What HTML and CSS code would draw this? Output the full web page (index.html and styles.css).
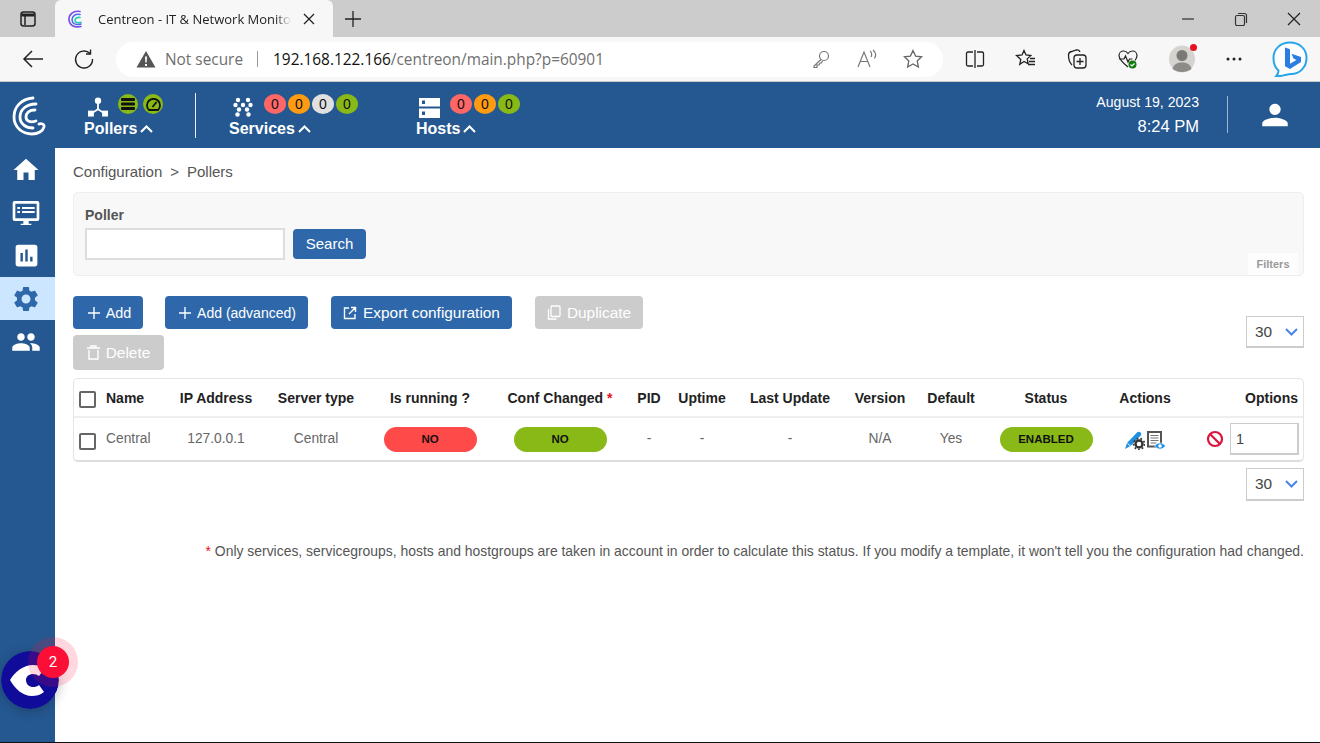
FILE: index.html
```html
<!DOCTYPE html>
<html lang="en">

<head>
    <meta charset="UTF-8">
    <title>Centreon - IT &amp; Network Monitoring</title>
    <link rel="stylesheet" href="styles.css">
</head>

<body>
    <!-- browser tabs -->
    <div class="tabstrip">
        <svg class="tabs-btn" width="18" height="18" viewBox="0 0 18 18" fill="none" stroke="#222" stroke-width="1.5">
            <rect x="2" y="2" width="14" height="14" rx="2.5" />
            <path d="M2.5 5h13" stroke-width="3" />
            <path d="M6 5v10" />
        </svg>
        <div class="tab">
            <svg class="favicon" width="20" height="20" viewBox="0 0 20 20" fill="none" stroke-width="1.6" stroke-linecap="round">
                <path d="M13 2.5C6 1 1.5 6 2 11c.5 5 5 8 12 6.5" stroke="#7a4de8" />
                <path d="M13 5.5C8 4.5 4.8 7.5 5 11c.2 3.5 4 5.5 9 4" stroke="#4a6cf0" />
                <path d="M13 8.5c-3-.5-5 1-5 2.800 0 2 2.500 3 6 2" stroke="#2cc9b5" />
            </svg>
            <span class="tab-title">Centreon - IT &amp; Network Monito</span>
            <svg class="tab-close" width="12" height="12" viewBox="0 0 12 12" stroke="#222" stroke-width="1.3">
                <path d="M1 1l10 10M11 1L1 11" />
            </svg>
        </div>
        <svg class="new-tab" width="18" height="18" viewBox="0 0 18 18" stroke="#222" stroke-width="1.3">
            <path d="M9 1v16M1 9h16" />
        </svg>
        <div class="window-btns">
            <svg width="14" height="14" viewBox="0 0 14 14" stroke="#444" stroke-width="1.4">
                <path d="M1 7h12" />
            </svg>
            <svg width="14" height="14" viewBox="0 0 14 14" fill="none" stroke="#333" stroke-width="1.2">
                <rect x="1.5" y="3.5" width="9" height="10" rx="1.5" />
                <path d="M4 1.5h6.5a2 2 0 0 1 2 2V11" />
            </svg>
            <svg width="14" height="14" viewBox="0 0 14 14" stroke="#222" stroke-width="1.2">
                <path d="M1 1l12 12M13 1L1 13" />
            </svg>
        </div>
    </div>

    <!-- browser toolbar -->
    <div class="toolbar">
        <svg class="nav-back" width="22" height="20" viewBox="0 0 22 20" fill="none" stroke="#222" stroke-width="1.5">
            <path d="M21 10H2M10 2l-8 8 8 8" />
        </svg>
        <svg class="nav-reload" width="22" height="22" viewBox="0 0 22 22" fill="none" stroke="#222" stroke-width="1.4">
            <path d="M17 5.5A8.5 8.5 0 1 0 19.5 11" />
            <path d="M17.5 1.5v4.5H13" />
        </svg>
        <div class="addressbar">
            <svg width="20" height="18" viewBox="0 0 20 18">
                <path d="M10 1L19.5 17.5H.5z" fill="#555" />
                <path d="M9 6.5h2l-.3 6h-1.4zM9 14h2v2H9z" fill="#fff" />
            </svg>
            <span class="not-secure">Not secure</span>
            <span class="addr-sep"></span>
            <span class="url"><span class="url-host">192.168.122.166</span>/centreon/main.php?p=60901</span>
            <span class="addr-icons">
                <svg width="20" height="20" viewBox="0 0 20 20" fill="none" stroke="#777" stroke-width="1.2">
                    <circle cx="13" cy="7" r="4.5" />
                    <path d="M10 10.5L3 17v1.5h3V16h2l1-2h1.5l1-2" />
                </svg>
                <svg width="22" height="20" viewBox="0 0 22 20" fill="none" stroke="#777" stroke-width="1.2">
                    <path d="M2 18L8 3l6 15M4.5 12.5h7" />
                    <path d="M14 2c2 1.5 2 4.5 1 6M17 1c3 2.5 3 6 1.5 8.5" />
                </svg>
                <svg width="20" height="20" viewBox="0 0 20 20" fill="none" stroke="#666" stroke-width="1.3">
                    <path d="M10 1.5l2.600 5.600 6 .7-4.400 4.200 1.200 6-5.400-3-5.400 3 1.200-6L1.400 7.800l6-.7z" />
                </svg>
            </span>
        </div>
        <div class="tool-icons">
            <svg width="20" height="20" viewBox="0 0 20 20" fill="none" stroke="#222" stroke-width="1.3">
                <path d="M8 3H3a1.5 1.5 0 0 0-1.5 1.5v11A1.5 1.5 0 0 0 3 17h5M12 3h5a1.5 1.5 0 0 1 1.5 1.5v11A1.5 1.5 0 0 1 17 17h-5M10 1v18" />
            </svg>
            <svg width="22" height="20" viewBox="0 0 22 20" fill="none" stroke="#222" stroke-width="1.3">
                <path d="M9 1.5l2 4.500 4.800.5-3.600 3.400 1 4.900L9 12.500l-4.200 2.800 1-4.900L1.500 6.500 7 6z" />
                <path d="M15 9.500h5M14 12.500h6M13 15.500h7" />
            </svg>
            <svg width="20" height="22" viewBox="0 0 20 22" fill="none" stroke="#222" stroke-width="1.3">
                <rect x="7" y="7" width="12" height="13" rx="3" />
                <path d="M13 10v7M9.5 13.5h7M5 17C3 15 1.5 12 1.5 7c0-1.5 1-3 3-3.500l5-1.500c1.500-.4 3 .5 3.500 2" />
            </svg>
            <svg width="22" height="22" viewBox="0 0 22 22" fill="none" stroke="#222" stroke-width="1.2">
                <path d="M11 19C6 15 2 11.500 2 7.500 2 5 4 3 6.500 3 8.500 3 10 4 11 5.500 12 4 13.500 3 15.500 3 18 3 20 5 20 7.500c0 2-1 3.500-2 5" />
                <path d="M2 11h5l1.500-3 2.500 6 1.500-3h3" />
                <circle cx="15.5" cy="16.5" r="4" fill="#107c10" stroke="none" />
                <path d="M13.500 16.500l1.500 1.500 2.500-2.500" stroke="#fff" />
            </svg>
            <span class="profile">
                <svg width="26" height="28" viewBox="0 0 26 28">
                    <ellipse cx="13" cy="14" rx="13" ry="13.5" fill="#d5d3cf" />
                    <circle cx="13" cy="10.5" r="5.5" fill="#7b7976" />
                    <path d="M3.500 24c1-5 5-6.500 9.500-6.500s8.500 1.500 9.500 6.500c-2.500 2-6 3-9.500 3s-7-1-9.500-3z" fill="#8d8b88" />
                </svg>
                <span class="profile-dot"></span>
            </span>
            <svg width="18" height="6" viewBox="0 0 18 6" fill="#222">
                <circle cx="3" cy="3" r="1.5" />
                <circle cx="9" cy="3" r="1.5" />
                <circle cx="15" cy="3" r="1.5" />
            </svg>
        </div>
        <svg class="bing" width="36" height="36" viewBox="0 0 36 36">
            <path d="M18 1.500C27.500 1.500 34.500 8 34.500 17S28 33 19 33c-3 0-10 2.500-15 2.500 2-2 2.500-4.500 2.500-6C3 26.500 1.500 22 1.500 17 1.500 8 8.500 1.500 18 1.500z" fill="#fff" stroke="#27a5e8" stroke-width="2" />
            <path d="M13 6.500l5 1.800v14.500l6.500-3.800-3-1.500-2-4.800 9.500 3.300v5L18 28l-5-2.800z" fill="#2a7de1" />
        </svg>
    </div>

    <!-- top counters -->
    <header class="app-header">
        <svg class="logo" width="34" height="40" viewBox="0 0 34 40" fill="none" stroke="#fff" stroke-width="2.8" stroke-linecap="round">
            <path d="M21 2C9 3 2 11 2 21c0 10 8 17 18 17 6 0 11-3 12-7 .5-3-3-4-5-3" />
            <path d="M24 8C15 8 8 13 8 21c0 7 6 11 13 11" />
            <path d="M23 14c-6 0-9 3-9 7 0 4 4 6 10 4" />
        </svg>

        <div class="group group-pollers">
            <div class="group-top">
                <svg class="group-icon" width="20" height="20" viewBox="0 0 22 22" fill="#fff">
                    <circle cx="11" cy="4" r="3.5" />
                    <path d="M10 6h2v7l6 4-1 1.500-6-4-6 4-1-1.500 6-4z" />
                    <rect x="0" y="15" width="6.5" height="6.5" />
                    <rect x="15.5" y="15" width="6.5" height="6.5" />
                </svg>
                <span class="badge badge-green badge-poller">
                    <svg width="14" height="12" viewBox="0 0 14 12" fill="#111">
                        <rect x="0" y="0" width="14" height="3" rx="1" />
                        <rect x="0" y="4.5" width="14" height="3" rx="1" />
                        <rect x="0" y="9" width="14" height="3" rx="1" />
                    </svg>
                </span>
                <span class="badge badge-green badge-poller">
                    <svg width="15" height="13" viewBox="0 0 15 13" fill="none" stroke="#111" stroke-width="1.8">
                        <path d="M3 12A6.500 6.500 0 1 1 12 12z" />
                        <path d="M6.500 9l4-5" />
                    </svg>
                </span>
            </div>
            <div class="group-label">Pollers <svg class="chev" width="13" height="8" viewBox="0 0 13 8" fill="none" stroke="#fff" stroke-width="2">
                    <path d="M1 7l5.500-5.500L12 7" />
                </svg></div>
        </div>
        <span class="header-sep"></span>

        <div class="group group-services">
            <div class="group-top">
                <svg class="group-icon" width="20" height="20" viewBox="0 0 20 20" fill="#fff">
                    <circle cx="5" cy="3" r="2.2" />
                    <circle cx="15" cy="3" r="2.2" />
                    <circle cx="2.5" cy="8" r="2.2" />
                    <circle cx="10" cy="8" r="2.2" />
                    <circle cx="17.5" cy="8" r="2.2" />
                    <circle cx="6" cy="12.5" r="2.2" />
                    <circle cx="14" cy="12.5" r="2.2" />
                    <circle cx="4.5" cy="17.5" r="2.2" />
                    <circle cx="15.5" cy="17.5" r="2.2" />
                </svg>
                <span class="badge badge-red">0</span>
                <span class="badge badge-orange">0</span>
                <span class="badge badge-grey">0</span>
                <span class="badge badge-green">0</span>
            </div>
            <div class="group-label">Services <svg class="chev" width="13" height="8" viewBox="0 0 13 8" fill="none" stroke="#fff" stroke-width="2">
                    <path d="M1 7l5.500-5.500L12 7" />
                </svg></div>
        </div>

        <div class="group group-hosts">
            <div class="group-top">
                <svg class="group-icon" width="21" height="21" viewBox="0 0 21 21" fill="#fff">
                    <path d="M0 1h21v8.500H0zM3 3.500v3.500h3V3.500zM0 11.500h21V21H0zM3 14.500v3.500h3v-3.500z" fill-rule="evenodd" />
                </svg>
                <span class="badge badge-red">0</span>
                <span class="badge badge-orange">0</span>
                <span class="badge badge-green">0</span>
            </div>
            <div class="group-label">Hosts <svg class="chev" width="13" height="8" viewBox="0 0 13 8" fill="none" stroke="#fff" stroke-width="2">
                    <path d="M1 7l5.500-5.500L12 7" />
                </svg></div>
        </div>

        <div class="clock">
            <div class="clock-date">August 19, 2023</div>
            <div class="clock-time">8:24 PM</div>
        </div>
        <span class="clock-sep"></span>
        <svg class="user-icon" width="34" height="34" viewBox="0 0 24 24" fill="#fff">
            <path d="M12 12c2.210 0 4-1.790 4-4s-1.790-4-4-4-4 1.790-4 4 1.790 4 4 4zm0 2c-2.670 0-9 1.340-9 4v2h18v-2c0-2.660-6.330-4-9-4z" />
        </svg>
    </header>

    <div class="app-body">
        <nav class="sidebar">
            <a class="side-item">
                <svg width="30" height="30" viewBox="0 0 24 24" fill="#fff">
                    <path d="M10 20v-6h4v6h5v-8h3L12 3 2 12h3v8z" />
                </svg>
            </a>
            <a class="side-item">
                <svg width="32" height="32" viewBox="0 0 24 24" fill="#fff">
                    <path fill-rule="evenodd" d="M3.500 3h17A1.500 1.500 0 0 1 22 4.500v12a1.500 1.500 0 0 1-1.500 1.500H14v2h2v1H8v-1h2v-2H3.500A1.500 1.500 0 0 1 2 16.500v-12A1.500 1.500 0 0 1 3.500 3zM4 5v11h16V5zM5.500 7.500h2v1.500h-2zM9 7.500h9.500v1.500H9zM5.500 10.500h2V12h-2zM9 10.500h9.500V12H9z" />
                </svg>
            </a>
            <a class="side-item">
                <svg width="29" height="29" viewBox="0 0 24 24" fill="#fff">
                    <path d="M19 3H5c-1.100 0-2 .9-2 2v14c0 1.100.9 2 2 2h14c1.100 0 2-.9 2-2V5c0-1.100-.9-2-2-2zM9 17H7v-7h2v7zm4 0h-2V7h2v10zm4 0h-2v-4h2v4z" />
                </svg>
            </a>
            <a class="side-item side-active">
                <svg width="30" height="30" viewBox="0 0 24 24" fill="#2e68aa">
                    <path d="M19.140 12.940c.04-.3.06-.61.06-.94 0-.32-.02-.64-.07-.94l2.030-1.580c.18-.14.23-.41.12-.61l-1.920-3.320c-.12-.22-.37-.29-.59-.22l-2.390.96c-.5-.38-1.030-.7-1.620-.94l-.36-2.540c-.04-.24-.24-.41-.48-.41h-3.840c-.24 0-.43.17-.47.41l-.36 2.540c-.59.24-1.130.57-1.620.94l-2.390-.96c-.22-.08-.47 0-.59.22L2.740 8.870c-.12.21-.08.47.12.61l2.030 1.580c-.05.3-.09.63-.09.94s.02.64.07.94l-2.030 1.580c-.18.14-.23.41-.12.61l1.920 3.320c.12.22.37.29.59.22l2.390-.96c.5.38 1.030.7 1.620.94l.36 2.540c.05.24.24.41.48.41h3.840c.24 0 .44-.17.47-.41l.36-2.540c.59-.24 1.130-.56 1.620-.94l2.390.96c.22.08.47 0 .59-.22l1.920-3.320c.12-.22.07-.47-.12-.61l-2.010-1.580zM12 15.600c-1.980 0-3.600-1.620-3.600-3.600s1.620-3.600 3.600-3.600 3.600 1.620 3.600 3.600-1.620 3.600-3.600 3.600z" />
                </svg>
            </a>
            <a class="side-item">
                <svg width="30" height="30" viewBox="0 0 24 24" fill="#fff">
                    <path d="M16 11c1.660 0 2.990-1.340 2.990-3S17.660 5 16 5c-1.660 0-3 1.340-3 3s1.340 3 3 3zm-8 0c1.660 0 2.990-1.340 2.990-3S9.660 5 8 5C6.340 5 5 6.340 5 8s1.340 3 3 3zm0 2c-2.330 0-7 1.170-7 3.500V19h14v-2.500c0-2.330-4.670-3.500-7-3.500zm8 0c-.29 0-.62.02-.97.05 1.160.84 1.970 1.970 1.970 3.450V19h6v-2.500c0-2.330-4.670-3.500-7-3.500z" />
                </svg>
            </a>
        </nav>

        <main class="content">
            <div class="breadcrumb"><span>Configuration</span><span class="crumb-sep">&gt;</span><span>Pollers</span></div>

            <form class="filters" onsubmit="return false">
                <label class="filter-label">Poller</label>
                <div class="filter-row">
                    <input class="filter-input" type="text">
                    <button class="btn btn-search">Search</button>
                </div>
                <span class="filters-tag">Filters</span>
            </form>

            <div class="actions-bar">
                <div class="btn-list">
                    <div class="btn-row">
                        <button class="btn btn-add">
                            <svg width="12" height="12" viewBox="0 0 14 14" stroke="#fff" stroke-width="1.6"><path d="M7 0v14M0 7h14" /></svg>
                            Add
                        </button>
                        <button class="btn btn-advanced">
                            <svg width="12" height="12" viewBox="0 0 14 14" stroke="#fff" stroke-width="1.6"><path d="M7 0v14M0 7h14" /></svg>
                            Add (advanced)
                        </button>
                        <button class="btn btn-export">
                            <svg width="14" height="14" viewBox="0 0 14 14" fill="none" stroke="#fff" stroke-width="1.4"><path d="M6 2H1.500v10.500H12V8M8 1.500h4.500V6M12.500 1.500L6 8" /></svg>
                            Export configuration
                        </button>
                        <button class="btn btn-off btn-duplicate">
                            <svg width="14" height="15" viewBox="0 0 14 15" fill="none" stroke="#fff" stroke-width="1.3"><rect x="4" y="1" width="9" height="10.5" rx="1" /><path d="M1.500 4v10h8" /></svg>
                            Duplicate
                        </button>
                    </div>
                    <div class="btn-row">
                        <button class="btn btn-off btn-delete">
                            <svg width="13" height="15" viewBox="0 0 13 15" fill="none" stroke="#fff" stroke-width="1.4"><path d="M0 3h13M4 3V1h5v2M2 5v9h9V5" /></svg>
                            Delete
                        </button>
                    </div>
                </div>
                <div class="pager-select pager-top">30
                    <svg width="13" height="8" viewBox="0 0 13 8" fill="none" stroke="#4a86e8" stroke-width="2"><path d="M1 1l5.500 5.500L12 1" /></svg>
                </div>
            </div>

            <div class="table-wrap">
                <table class="list">
                    <colgroup>
                        <col class="c-check"><col class="c-name"><col class="c-ip"><col class="c-type"><col class="c-run"><col class="c-conf"><col class="c-pid"><col class="c-up"><col class="c-last"><col class="c-ver"><col class="c-def"><col class="c-status"><col class="c-act"><col class="c-opt">
                    </colgroup>
                    <thead>
                        <tr>
                            <th><span class="check"></span></th>
                            <th class="left">Name</th>
                            <th>IP Address</th>
                            <th>Server type</th>
                            <th>Is running ?</th>
                            <th>Conf Changed <span class="star">*</span></th>
                            <th>PID</th>
                            <th>Uptime</th>
                            <th>Last Update</th>
                            <th>Version</th>
                            <th>Default</th>
                            <th>Status</th>
                            <th>Actions</th>
                            <th class="right">Options</th>
                        </tr>
                    </thead>
                    <tbody>
                        <tr>
                            <td><span class="check"></span></td>
                            <td class="left">Central</td>
                            <td>127.0.0.1</td>
                            <td>Central</td>
                            <td><span class="pill pill-red">NO</span></td>
                            <td><span class="pill pill-green">NO</span></td>
                            <td>-</td>
                            <td>-</td>
                            <td>-</td>
                            <td>N/A</td>
                            <td>Yes</td>
                            <td><span class="pill pill-green">ENABLED</span></td>
                            <td>
                                <div class="act-icons">
                                    <svg width="20" height="20" viewBox="0 0 20 20">
                                        <path d="M0 19l2-6L12 2.500c1-1 2.500-1 3.500 0s1 2 .2 3L5.500 16z" fill="#1e90e0" />
                                        <path d="M2.500 13.500l3 2.500" stroke="#fff" stroke-width="1" />
                                        <circle cx="14" cy="14" r="3.5" fill="none" stroke="#333" stroke-width="2.4" />
                                        <circle cx="14" cy="14" r="5.5" fill="none" stroke="#333" stroke-width="1.6" stroke-dasharray="1.8 2" />
                                    </svg>
                                    <svg width="19" height="19" viewBox="0 0 19 19">
                                        <rect x="1" y="1" width="13" height="14.5" fill="#fff" stroke="#555" stroke-width="2" />
                                        <path d="M3.500 4.500h8M3.500 7h8M3.500 9.500h8M3.500 12h6" stroke="#777" stroke-width="1.2" />
                                        <path d="M7.500 15c3-4 8-4 11 0-3 4-8 4-11 0z" fill="#1e90e0" stroke="#fff" stroke-width=".6" />
                                        <circle cx="13" cy="15" r="1.8" fill="#fff" />
                                    </svg>
                                </div>
                            </td>
                            <td class="opt-cell">
                                <svg width="18" height="18" viewBox="0 0 18 18" fill="none" stroke="#dc143c" stroke-width="2.2">
                                    <circle cx="9" cy="9" r="7" />
                                    <path d="M4 4l10 10" />
                                </svg>
                                <input class="opt-input" type="text" value="1">
                            </td>
                        </tr>
                    </tbody>
                </table>
            </div>

            <div class="pager-bottom">
                <div class="pager-select">30
                    <svg width="13" height="8" viewBox="0 0 13 8" fill="none" stroke="#4a86e8" stroke-width="2"><path d="M1 1l5.500 5.500L12 1" /></svg>
                </div>
            </div>

            <p class="footnote"><span class="star">*</span> Only services, servicegroups, hosts and hostgroups are taken in account in order to calculate this status. If you modify a template, it won't tell you the configuration had changed.</p>
        </main>
    </div>

    <!-- floating news button -->
    <div class="news">
        <span class="news-halo"></span>
        <svg class="news-logo" width="58" height="58" viewBox="0 0 58 58">
            <circle cx="29" cy="29" r="29" fill="#100c99" />
            <path d="M9 29C14 21 22 14 32 14c4 0 8 1 12 3l-6 8c-5-4-13-2-13 4 0 7 8 9 13 5l5 7c-4 3-8 4-12 4C22 45 14 38 9 29z" fill="#fff" />
        </svg>
        <span class="news-count">2</span>
    </div>
</body>

</html>
```

FILE: styles.css
```css
* {
    box-sizing: border-box;
    font-family: "Liberation Sans", Arial, sans-serif;
}

html,
body {
    height: 743px;
    padding: 0;
    margin: 0;
    overflow: hidden;
}

body {
    position: relative;
    display: flex;
    flex-direction: column;
    background-color: #fff;
    border-bottom: 1px solid #111;
}

/* browser frame */
.tabstrip {
    display: flex;
    align-items: center;
    height: 37px;
    flex-shrink: 0;
    background-color: #ccc;
}

.tabs-btn {
    margin-left: 19px;
    margin-top: 1px;
}

.tab {
    display: flex;
    align-items: center;
    align-self: flex-end;
    width: 278px;
    height: 37px;
    margin-left: 18px;
    padding: 0 12px;
    background-color: #f7f7f7;
    border-radius: 6px 6px 0 0;
}

.tab-title {
    margin-left: 11px;
    white-space: nowrap;
    font-family: "Open Sans", sans-serif;
    font-size: 13px;
    color: #222;
    -webkit-mask-image: linear-gradient(to right, #000 92%, transparent);
    mask-image: linear-gradient(to right, #000 92%, transparent);
}

.tab-close {
    margin-left: auto;
    margin-right: 6px;
}

.new-tab {
    margin-left: 11px;
}

.window-btns {
    display: flex;
    gap: 39px;
    margin-left: auto;
    margin-right: 19px;
}

.toolbar {
    display: flex;
    align-items: center;
    height: 45px;
    flex-shrink: 0;
    background-color: #f7f7f7;
    border-bottom: 1px solid #c8c8c8;
}

.nav-back {
    margin-left: 22px;
}

.nav-reload {
    margin-left: 29px;
}

.addressbar {
    display: flex;
    align-items: center;
    width: 827px;
    height: 35px;
    margin-left: 21px;
    padding: 0 20px;
    background-color: #fff;
    border-radius: 18px;
}

.not-secure {
    margin-left: 9px;
    font-family: "Open Sans", sans-serif;
    font-size: 15.4px;
    color: #707070;
}

.addr-sep {
    width: 1px;
    height: 16px;
    margin: 0 15px 0 14px;
    background-color: #999;
}

.url {
    font-family: "Open Sans", sans-serif;
    font-size: 15.4px;
    color: #707070;
}

.url-host {
    font-family: inherit;
    color: #111;
}

.addr-icons {
    display: flex;
    align-items: center;
    gap: 25px;
    margin-left: auto;
}

.tool-icons {
    display: flex;
    align-items: center;
    gap: 30px;
    margin-left: 22px;
}

.profile {
    position: relative;
    display: flex;
}

.profile-dot {
    position: absolute;
    top: -1px;
    right: -2px;
    width: 7px;
    height: 7px;
    background-color: #e81123;
    border-radius: 50%;
}

.bing {
    margin-left: 29px;
}

/* app header */
.app-header {
    display: flex;
    align-items: flex-start;
    height: 66px;
    flex-shrink: 0;
    background-color: #255891;
    color: #fff;
}

.logo {
    margin: 14px 0 0 12px;
}

.group {
    display: flex;
    flex-direction: column;
}

.group-top {
    display: flex;
    align-items: flex-start;
    height: 30px;
    padding-top: 12px;
}

.group-label {
    display: flex;
    align-items: center;
    gap: 3px;
    font-size: 16px;
    font-weight: 700;
    line-height: 20px;
    margin-top: 7px;
}

.group-pollers {
    width: 111px;
    margin-left: 38px;
}

.group-pollers .group-icon {
    margin: 3px 10px 0 4px;
}

.group-services {
    width: 187px;
    margin-left: 33px;
}

.group-services .group-icon {
    margin: 3px 11px 0 4px;
}

.group-hosts .group-icon {
    margin: 3px 10px 0 3px;
}

.badge {
    display: flex;
    align-items: center;
    justify-content: center;
    width: 22px;
    height: 20px;
    margin-right: 2px;
    border-radius: 50%;
    font-size: 14px;
    color: #111;
}

.badge-poller {
    width: 20px;
    margin-right: 5px;
}

.badge-red {
    background-color: #ff6666;
}

.badge-orange {
    background-color: #ff9a13;
}

.badge-grey {
    background-color: #e0e0e0;
}

.badge-green {
    background-color: #88b917;
}

.header-sep {
    width: 1px;
    height: 45px;
    margin-top: 11px;
    background-color: #e8eef5;
}

.clock {
    margin-left: auto;
    padding-top: 11px;
    text-align: right;
}

.clock-date {
    font-size: 14.1px;
    line-height: 18px;
}

.clock-time {
    font-size: 16.5px;
    line-height: 20px;
    margin-top: 5px;
}

.clock-sep {
    width: 1px;
    height: 37px;
    margin: 14px 30px 0 28px;
    background-color: #9db5d0;
}

.user-icon {
    margin: 16px 28px 0 0;
}

/* app body */
.app-body {
    display: flex;
    flex: 1;
    min-height: 0;
}

.sidebar {
    width: 55px;
    flex-shrink: 0;
    background-color: #255891;
}

.side-item {
    display: flex;
    align-items: center;
    justify-content: center;
    height: 43px;
    padding-right: 3px;
}

.side-active {
    background-color: #cce6ff;
}

.content {
    flex: 1;
    min-width: 0;
    padding: 0 16px 0 18px;
}

.breadcrumb {
    display: flex;
    height: 44px;
    padding-top: 15px;
    font-size: 15px;
    line-height: 17px;
    color: #555;
}

.crumb-sep {
    margin: 0 8px;
}

.filters {
    position: relative;
    height: 84px;
    padding: 14px 11px;
    background-color: #f8f8f8;
    border: 1px solid #eee;
    border-radius: 5px;
}

.filter-label {
    display: block;
    font-size: 14px;
    font-weight: 700;
    line-height: 17px;
    color: #555;
}

.filter-row {
    display: flex;
    align-items: center;
    gap: 8px;
    margin-top: 4px;
}

.filter-input {
    width: 200px;
    height: 32px;
    background-color: #fff;
    border: 2px solid #ddd;
    outline: none;
}

.filters-tag {
    position: absolute;
    right: 5px;
    bottom: 0;
    width: 50px;
    height: 22px;
    font-size: 11px;
    font-weight: 700;
    line-height: 22px;
    text-align: center;
    color: #999;
    background-color: #fdfdfd;
}

.btn {
    display: inline-flex;
    align-items: center;
    justify-content: center;
    height: 33px;
    padding: 0;
    background-color: #2e68aa;
    border: none;
    border-radius: 4px;
    color: #fff;
    font-size: 14px;
}

.btn-search {
    width: 73px;
    height: 30px;
    padding-bottom: 2px;
    font-size: 15px;
}

.actions-bar {
    display: flex;
    justify-content: space-between;
    margin-top: 20px;
}

.btn-row {
    display: flex;
}

.btn-row + .btn-row {
    margin-top: 6px;
}

.btn-add {
    gap: 6px;
    width: 70px;
    padding-left: 3px;
    font-size: 14.4px;
}

.btn-advanced {
    gap: 6px;
    width: 143px;
    margin-left: 22px;
    padding-left: 2px;
}

.btn-export {
    gap: 6px;
    width: 181px;
    margin-left: 23px;
    font-size: 15.4px;
}

.btn-off {
    background-color: #ccc;
    gap: 6px;
}

.btn-duplicate {
    width: 108px;
    margin-left: 23px;
    font-size: 15.4px;
}

.btn-delete {
    width: 91px;
    height: 35px;
    font-size: 15.4px;
}

.pager-select {
    display: flex;
    align-items: center;
    justify-content: space-between;
    width: 58px;
    height: 31px;
    padding: 0 5px 0 8px;
    background-color: #fff;
    border: 1px solid #ccc;
    box-shadow: 0 1px 0 #ccc;
    font-size: 15.4px;
    color: #444;
}

.pager-top {
    margin-top: 20px;
}

.table-wrap {
    margin-top: 8px;
    background-color: #fff;
    border: 1px solid #e4e4e4;
    border-bottom: 2px solid #ddd;
    border-radius: 5px;
}

.list {
    width: 100%;
    table-layout: fixed;
    border-collapse: collapse;
}

.c-check { width: 27px; }
.c-name { width: 64px; }
.c-ip { width: 102px; }
.c-type { width: 98px; }
.c-run { width: 130px; }
.c-conf { width: 130px; }
.c-pid { width: 48px; }
.c-up { width: 58px; }
.c-last { width: 118px; }
.c-ver { width: 62px; }
.c-def { width: 80px; }
.c-status { width: 110px; }
.c-act { width: 88px; }

.list th {
    height: 38px;
    padding: 0;
    border-bottom: 2px solid #eee;
    font-size: 14px;
    font-weight: 700;
    color: #222;
    text-align: center;
    white-space: nowrap;
}

.list td {
    height: 42px;
    padding: 0 0 2px;
    font-size: 13.8px;
    color: #666;
    text-align: center;
    white-space: nowrap;
}

.list .left {
    padding-left: 5px;
    text-align: left;
}

.list th.right {
    padding-right: 5px;
    text-align: right;
}

.star {
    color: #e81123;
}

.check {
    display: block;
    width: 17px;
    height: 17px;
    margin: 4px 0 0 5px;
    border: 2px solid #666;
    border-radius: 2px;
    background-color: #fff;
}

.list td .check {
    margin-top: 6px;
}

.pill {
    display: block;
    width: 93px;
    height: 25px;
    margin: 2px auto 0;
    border-radius: 13px;
    font-size: 11.5px;
    font-weight: 700;
    line-height: 25px;
    color: #111;
}

.pill-red {
    background-color: #ff4a4a;
}

.pill-green {
    background-color: #88b917;
}

.act-icons {
    display: flex;
    justify-content: center;
    align-items: center;
    gap: 2px;
    padding-top: 4px;
}

.list .opt-cell {
    display: flex;
    align-items: center;
    justify-content: flex-end;
    gap: 6px;
    padding: 0 4px 0 0;
}

.opt-input {
    width: 69px;
    height: 32px;
    padding: 0 5px;
    border: 1px solid #ccc;
    border-bottom-width: 2px;
    border-right-width: 2px;
    outline: none;
    font-size: 14.5px;
    color: #444;
}

.pager-bottom {
    display: flex;
    justify-content: flex-end;
    margin-top: 6px;
}

.pager-bottom .pager-select {
    height: 32px;
}

.footnote {
    margin: 43px 0 0;
    font-size: 13.93px;
    line-height: 16px;
    text-align: right;
    color: #555;
}

/* floating news button */
.news {
    position: absolute;
    left: 1px;
    top: 651px;
    width: 58px;
    height: 58px;
}

.news-logo {
    display: block;
    border-radius: 50%;
    box-shadow: 0 2px 12px rgba(0, 0, 0, 0.25);
}

.news-halo {
    position: absolute;
    left: 27px;
    top: -14px;
    width: 50px;
    height: 50px;
    background-color: rgba(255, 20, 60, 0.17);
    border-radius: 50%;
    z-index: 1;
}

.news-count {
    position: absolute;
    left: 36px;
    top: -5px;
    width: 32px;
    height: 32px;
    background-color: #fb0f37;
    border-radius: 50%;
    z-index: 2;
    font-family: Roboto, sans-serif;
    font-size: 15px;
    line-height: 32px;
    text-align: center;
    color: #fff;
}
```
